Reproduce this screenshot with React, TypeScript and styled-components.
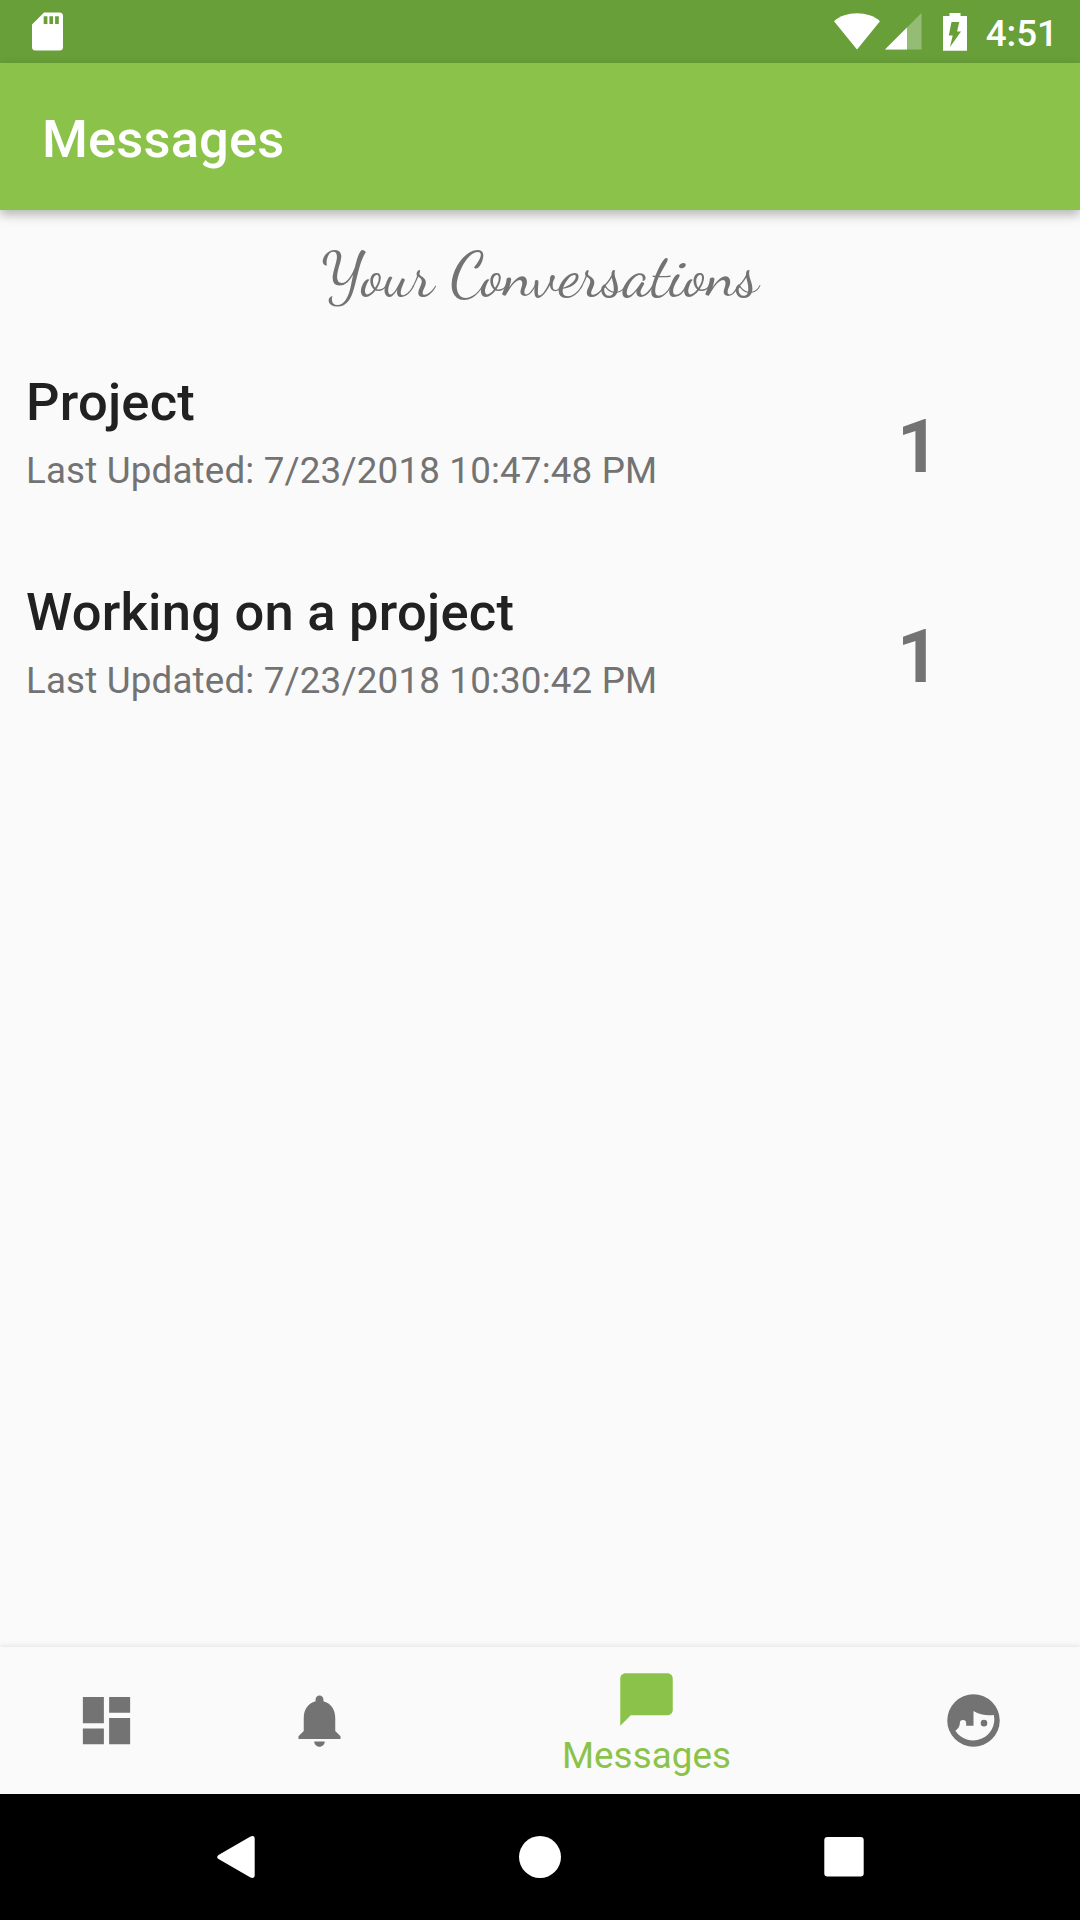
import React from "react";
import styled, { createGlobalStyle } from "styled-components";

const GREEN = "#8bc34a";
const GREY = "#737373";

const GlobalStyle = createGlobalStyle`
  * { box-sizing: border-box; }
  body { margin: 0; background: #fafafa; }
`;

const Screen = styled.div`
  display: flex;
  flex-direction: column;
  width: 1080px;
  height: 1920px;
  overflow: hidden;
  background: #fafafa;
  font-family: Roboto, "Liberation Sans", sans-serif;
`;

const StatusBar = styled.header`
  flex: none;
  display: flex;
  align-items: center;
  justify-content: space-between;
  height: 63px;
  padding: 0 22px 0 32px;
  background: #689f38;
  color: #fff;
`;

const StatusIcons = styled.div`
  display: flex;
  align-items: center;
`;

const Icon = styled.svg<{ $gap?: number }>`
  display: block;
  flex: none;
  fill: currentColor;
  margin-left: ${(p) => p.$gap ?? 0}px;
`;

const Clock = styled.time`
  margin-left: 19px;
  padding-top: 4px;
  font-size: 36.75px;
  font-weight: 500;
  line-height: 43px;
`;

const AppBar = styled.div`
  flex: none;
  display: flex;
  align-items: center;
  height: 147px;
  padding: 5px 42px 0;
  background: ${GREEN};
  box-shadow: 0 5px 10px rgba(0, 0, 0, 0.27);
`;

const Title = styled.h1`
  margin: 0;
  color: #fff;
  font-size: 52.5px;
  font-weight: 500;
  letter-spacing: 0.15px;
  line-height: 62px;
`;

const Content = styled.main`
  flex: 1;
  display: flex;
  flex-direction: column;
`;

const Heading = styled.h2`
  margin: 0;
  height: 131px;
  padding-top: 30px;
  text-align: center;
  color: ${GREY};
  font-family: "Dancing Script", "Liberation Serif", cursive;
  font-weight: 400;
  font-size: 63px;
  line-height: 70px;
`;

const Conversation = styled.article`
  display: grid;
  grid-template-columns: 1fr 183px;
  height: 210px;
  padding: 30px 0 0 26px;
`;

const Details = styled.div`
  display: flex;
  flex-direction: column;
  gap: 16px;
`;

const Subject = styled.h3`
  margin: 0;
  color: #212121;
  font-size: 52.5px;
  font-weight: 500;
  letter-spacing: 0.24px;
  line-height: 62px;
`;

const Updated = styled.p`
  margin: 0;
  color: ${GREY};
  font-size: 36.75px;
  letter-spacing: 0.165px;
  line-height: 43px;
`;

const Count = styled.span`
  padding-top: 33px;
  color: ${GREY};
  font-size: 73.5px;
  font-weight: 700;
  line-height: 86px;
`;

const Tabs = styled.nav`
  flex: none;
  display: grid;
  grid-template-columns: 213px 213px 441px 213px;
  height: 147px;
  background: #fafafa;
  box-shadow: 0 0 6px rgba(0, 0, 0, 0.13);
`;

const Tab = styled.button<{ $active?: boolean }>`
  display: flex;
  flex-direction: column;
  align-items: center;
  padding: ${(p) => (p.$active ? 21 : 42)}px 0 0;
  border: 0;
  background: none;
  font: inherit;
  color: ${(p) => (p.$active ? GREEN : GREY)};
`;

const TabLabel = styled.span`
  margin-top: 3px;
  font-size: 36.75px;
  letter-spacing: 0.08px;
  line-height: 43px;
`;

const SystemBar = styled.footer`
  flex: none;
  display: flex;
  align-items: center;
  justify-content: center;
  gap: 241px;
  height: 126px;
  padding: 1px 1px 0 0;
  background: #000;
  color: #fff;
`;

const conversations = [
  { subject: "Project", updated: "7/23/2018 10:47:48 PM", count: 1 },
  { subject: "Working on a project", updated: "7/23/2018 10:30:42 PM", count: 1 },
];

const tabs = [
  { name: "Dashboard", path: "M3 13h8V3H3v10zm0 8h8v-6H3v6zm10 0h8V11h-8v10zm0-18v6h8V3h-8z" },
  {
    name: "Notifications",
    path: "M12 22c1.1 0 2-.9 2-2h-4c0 1.1.9 2 2 2zm6-6v-5c0-3.07-1.63-5.64-4.5-6.32V4c0-.83-.67-1.5-1.5-1.5s-1.5.67-1.5 1.5v.68C7.64 5.36 6 7.92 6 11v5l-2 2v1h16v-1l-2-2z",
  },
  {
    name: "Messages",
    active: true,
    path: "M20 2H4c-1.1 0-2 .9-2 2v18l4-4h14c1.1 0 2-.9 2-2V4c0-1.1-.9-2-2-2z",
  },
  {
    name: "Profile",
    path: "M12 2a10 10 0 1 0 0 20 10 10 0 0 0 0-20zM5.1 15.9q1.7-1.3 1.7-2.9a1.2 1.2 0 0 1 2.4 0v1H12V8.4c2.4 1.4 5 1.85 7.75 1.5A8.05 8.05 0 0 1 5.1 15.9zM16 11.75a1.25 1.25 0 1 0 0 2.5 1.25 1.25 0 0 0 0-2.5z",
  },
];

export default function App() {
  return (
    <Screen>
      <GlobalStyle />
      <StatusBar>
        <Icon width="31" height="39" viewBox="0 0 31 39">
          <path
            fillRule="evenodd"
            d="M12 .5h15.500a3.500 3.500 0 0 1 3.500 3.500v31a3.500 3.500 0 0 1-3.500 3.500h-24a3.500 3.500 0 0 1-3.500-3.500V12.500zM11.700 4.300V12h3.700V4.300zm5.700 0V12h3.700V4.300zm5.700 0V12h3.700V4.300z"
          />
        </Icon>
        <StatusIcons>
          <Icon width="46" height="37" viewBox="0 0 46 37">
            <path d="M0 8.200C6 3 14 .3 23 .3S40 3 46 8.200L23 36.500z" />
          </Icon>
          <Icon $gap={5} width="37" height="37" viewBox="0 0 37 37">
            <path opacity=".3" d="M0 36.500 36.500 0v36.500z" />
            <path d="M0 36.500 22 14.500v22z" />
          </Icon>
          <Icon $gap={21} width="24" height="38" viewBox="0 0 24 38">
            <path
              fillRule="evenodd"
              d="M6.500 0h11v3H24v34.800H0V3h6.500zM8.500 9 5.800 22.600h3.900L7 34 18 18.500h-3.900L16.200 9z"
            />
          </Icon>
          <Clock>4:51</Clock>
        </StatusIcons>
      </StatusBar>
      <AppBar>
        <Title>Messages</Title>
      </AppBar>
      <Content>
        <Heading>Your Conversations</Heading>
        {conversations.map((c) => (
          <Conversation key={c.subject}>
            <Details>
              <Subject>{c.subject}</Subject>
              <Updated>Last Updated: {c.updated}</Updated>
            </Details>
            <Count>{c.count}</Count>
          </Conversation>
        ))}
      </Content>
      <Tabs>
        {tabs.map((t) => (
          <Tab key={t.name} $active={t.active} aria-label={t.name}>
            <Icon width="63" height="63" viewBox="0 0 24 24">
              <path fillRule={t.name === "Profile" ? "evenodd" : "nonzero"} d={t.path} />
            </Icon>
            {t.active && <TabLabel>{t.name}</TabLabel>}
          </Tab>
        ))}
      </Tabs>
      <SystemBar>
        <Icon width="63" height="63" viewBox="0 0 63 63">
          <path d="M14.500 28.900 46.500 10.400q4.200-1.500 4.200 2v37.200q0 3.500-4.200 2L14.500 33.100q-2.600-2.100 0-4.200z" />
        </Icon>
        <Icon width="63" height="63" viewBox="0 0 63 63">
          <circle cx="32" cy="31" r="21" />
        </Icon>
        <Icon width="63" height="63" viewBox="0 0 63 63">
          <rect x="12.300" y="11" width="39.400" height="39.600" rx="3" />
        </Icon>
      </SystemBar>
    </Screen>
  );
}
